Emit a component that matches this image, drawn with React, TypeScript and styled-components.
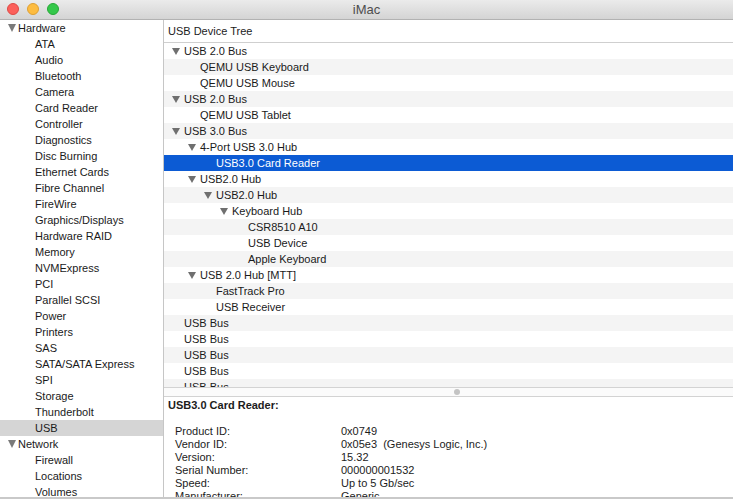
import React from 'react';
import styled, { createGlobalStyle } from 'styled-components';

const GlobalStyle = createGlobalStyle`
  html, body {
    margin: 0;
    padding: 0;
    overflow: hidden;
    background: #ffffff;
  }
  * {
    box-sizing: border-box;
  }
`;

const font = `"Liberation Sans", Arial, sans-serif`;

const Window = styled.div`
  width: 733px;
  height: 499px;
  display: flex;
  flex-direction: column;
  font-family: ${font};
  color: #1c1c1c;
  background: #ffffff;
  border-bottom: 2px solid #c9c9c9;
`;

const TitleBar = styled.div`
  height: 20px;
  flex: none;
  position: relative;
  display: flex;
  align-items: center;
  justify-content: center;
  background: linear-gradient(#ebebeb, #d4d4d4);
  border-bottom: 1px solid #b2b2b2;
`;

const Lights = styled.div`
  position: absolute;
  left: 7px;
  top: 3px;
  display: flex;
  gap: 8px;
`;

const Light = styled.span<{ fill: string; edge: string }>`
  width: 12px;
  height: 12px;
  border-radius: 50%;
  background: ${({ fill }) => fill};
  border: 1px solid ${({ edge }) => edge};
`;

const Title = styled.span`
  font-size: 13px;
  color: #4d4d4d;
`;

const Body = styled.div`
  flex: 1;
  display: flex;
  min-height: 0;
`;

const Sidebar = styled.div`
  width: 164px;
  flex: none;
  border-right: 1px solid #c6c6c6;
  overflow: hidden;
  font-size: 11px;
`;

const SideRow = styled.div<{ selected?: boolean; section?: boolean }>`
  height: 16px;
  display: flex;
  align-items: center;
  padding-left: ${({ section }) => (section ? '8px' : '35px')};
  background: ${({ selected }) => (selected ? '#d5d5d5' : 'transparent')};
  color: #1a1a1a;
  white-space: nowrap;
`;

const Disclosure = styled.span`
  width: 0;
  height: 0;
  border-left: 4.5px solid transparent;
  border-right: 4.5px solid transparent;
  border-top: 8px solid #7a7a7a;
  margin-right: 2px;
`;

const Main = styled.div`
  flex: 1;
  display: flex;
  flex-direction: column;
  min-width: 0;
`;

const TreeHeader = styled.div`
  height: 23px;
  flex: none;
  display: flex;
  align-items: center;
  padding-left: 4px;
  font-size: 11px;
  border-bottom: 1px solid #cfcfcf;
`;

const Tree = styled.div`
  height: 344px;
  flex: none;
  overflow: hidden;
  font-size: 11px;
`;

const TreeRow = styled.div<{ level: number; striped: boolean; selected?: boolean }>`
  height: 16px;
  display: flex;
  align-items: center;
  padding-left: ${({ level }) => 8 + level * 16}px;
  white-space: nowrap;
  color: ${({ selected }) => (selected ? '#ffffff' : '#1a1a1a')};
  background: ${({ selected, striped }) =>
    selected ? '#0c5bd4' : striped ? '#f4f4f4' : '#ffffff'};
`;

const Toggle = styled.span`
  width: 12px;
  flex: none;
  display: flex;
`;

const ToggleArrow = styled.span`
  width: 0;
  height: 0;
  border-left: 4px solid transparent;
  border-right: 4px solid transparent;
  border-top: 7px solid #6f6f6f;
`;

const Splitter = styled.div`
  height: 10px;
  flex: none;
  display: flex;
  align-items: center;
  justify-content: center;
  padding-left: 17px;
  background: #fbfbfb;
  border-top: 1px solid #d3d3d3;
  border-bottom: 1px solid #d3d3d3;
`;

const Grip = styled.span`
  width: 6px;
  height: 6px;
  border-radius: 50%;
  background: #c4c4c4;
`;

const Detail = styled.div`
  flex: 1;
  overflow: hidden;
  padding: 1px 0 0 4px;
  font-size: 11px;
`;

const DetailTitle = styled.div`
  font-weight: bold;
  line-height: 14px;
  margin-bottom: 13px;
`;

const Props = styled.div`
  display: grid;
  grid-template-columns: 166px 1fr;
  padding-left: 7px;
  line-height: 13px;
`;

const Value = styled.span`
  white-space: pre;
`;

type Node = { label: string; level: number; open?: boolean; selected?: boolean };

const sideItems: { label: string; section?: boolean; selected?: boolean }[] = [
  { label: 'Hardware', section: true },
  { label: 'ATA' },
  { label: 'Audio' },
  { label: 'Bluetooth' },
  { label: 'Camera' },
  { label: 'Card Reader' },
  { label: 'Controller' },
  { label: 'Diagnostics' },
  { label: 'Disc Burning' },
  { label: 'Ethernet Cards' },
  { label: 'Fibre Channel' },
  { label: 'FireWire' },
  { label: 'Graphics/Displays' },
  { label: 'Hardware RAID' },
  { label: 'Memory' },
  { label: 'NVMExpress' },
  { label: 'PCI' },
  { label: 'Parallel SCSI' },
  { label: 'Power' },
  { label: 'Printers' },
  { label: 'SAS' },
  { label: 'SATA/SATA Express' },
  { label: 'SPI' },
  { label: 'Storage' },
  { label: 'Thunderbolt' },
  { label: 'USB', selected: true },
  { label: 'Network', section: true },
  { label: 'Firewall' },
  { label: 'Locations' },
  { label: 'Volumes' },
];

const tree: Node[] = [
  { label: 'USB 2.0 Bus', level: 0, open: true },
  { label: 'QEMU USB Keyboard', level: 1 },
  { label: 'QEMU USB Mouse', level: 1 },
  { label: 'USB 2.0 Bus', level: 0, open: true },
  { label: 'QEMU USB Tablet', level: 1 },
  { label: 'USB 3.0 Bus', level: 0, open: true },
  { label: '4-Port USB 3.0 Hub', level: 1, open: true },
  { label: 'USB3.0 Card Reader', level: 2, selected: true },
  { label: 'USB2.0 Hub', level: 1, open: true },
  { label: 'USB2.0 Hub', level: 2, open: true },
  { label: 'Keyboard Hub', level: 3, open: true },
  { label: 'CSR8510 A10', level: 4 },
  { label: 'USB Device', level: 4 },
  { label: 'Apple Keyboard', level: 4 },
  { label: 'USB 2.0 Hub [MTT]', level: 1, open: true },
  { label: 'FastTrack Pro', level: 2 },
  { label: 'USB Receiver', level: 2 },
  { label: 'USB Bus', level: 0 },
  { label: 'USB Bus', level: 0 },
  { label: 'USB Bus', level: 0 },
  { label: 'USB Bus', level: 0 },
  { label: 'USB Bus', level: 0 },
];

const details: [string, string][] = [
  ['Product ID:', '0x0749'],
  ['Vendor ID:', '0x05e3  (Genesys Logic, Inc.)'],
  ['Version:', '15.32'],
  ['Serial Number:', '000000001532'],
  ['Speed:', 'Up to 5 Gb/sec'],
  ['Manufacturer:', 'Generic'],
  ['Location ID:', '0x14200000 / 3'],
];

export default function App() {
  return (
    <>
      <GlobalStyle />
      <Window>
        <TitleBar>
          <Lights>
            <Light fill="#fc605b" edge="#de4a45" />
            <Light fill="#fdbc40" edge="#dea033" />
            <Light fill="#34c84a" edge="#28a837" />
          </Lights>
          <Title>iMac</Title>
        </TitleBar>
        <Body>
          <Sidebar>
            {sideItems.map((item, i) => (
              <SideRow key={i} section={item.section} selected={item.selected}>
                {item.section && <Disclosure />}
                {item.label}
              </SideRow>
            ))}
          </Sidebar>
          <Main>
            <TreeHeader>USB Device Tree</TreeHeader>
            <Tree>
              {tree.map((node, i) => (
                <TreeRow key={i} level={node.level} striped={i % 2 === 1} selected={node.selected}>
                  <Toggle>{node.open && <ToggleArrow />}</Toggle>
                  {node.label}
                </TreeRow>
              ))}
            </Tree>
            <Splitter>
              <Grip />
            </Splitter>
            <Detail>
              <DetailTitle>USB3.0 Card Reader:</DetailTitle>
              <Props>
                {details.map(([k, v]) => (
                  <React.Fragment key={k}>
                    <span>{k}</span>
                    <Value>{v}</Value>
                  </React.Fragment>
                ))}
              </Props>
            </Detail>
          </Main>
        </Body>
      </Window>
    </>
  );
}
